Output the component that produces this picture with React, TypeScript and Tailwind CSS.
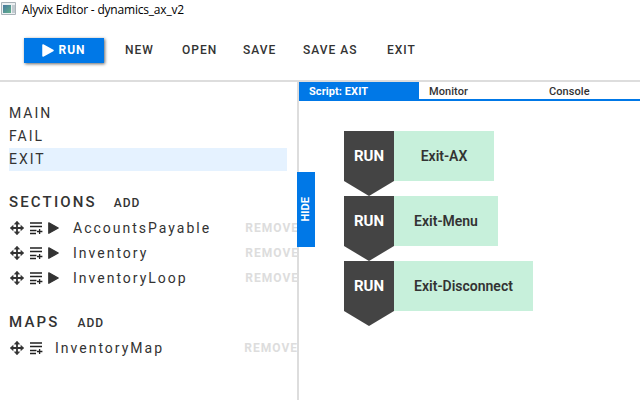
import React from 'react';

function MoveIcon() {
  return (
    <svg width="16" height="16" viewBox="0 0 16 16" className="shrink-0">
      <path d="M8 2.5v11M2.5 8h11" stroke="#333" strokeWidth="1.8" />
      <path d="M8 1L10.8 4.2H5.2zM8 15L5.2 11.8h5.6zM1 8L4.2 5.2v5.6zM15 8L11.8 10.8V5.2z" fill="#333" stroke="#333" strokeWidth=".4" strokeLinejoin="round" />
    </svg>
  );
}

function ListAddIcon() {
  return (
    <svg width="13" height="13" viewBox="0 0 13 13" className="shrink-0">
      <path d="M0 1h12M0 4.5h12M0 8.5h6.5M0 11.5h6M7 9.5h5.4M9.6 7v5" stroke="#222" strokeWidth="1.3" />
    </svg>
  );
}

function PlayIcon() {
  return (
    <svg width="11" height="12" viewBox="0 0 11 12" className="shrink-0">
      <path d="M.8 .8L10.2 6 .8 11.2z" fill="#333" stroke="#333" strokeWidth="1.3" strokeLinejoin="round" />
    </svg>
  );
}

function Row({ name, play, removeClass }: { name: string; play?: boolean; removeClass: string }) {
  return (
    <div className="flex h-[25px] w-full items-center pl-[9px]">
      <MoveIcon />
      <span className="ml-[5px] mt-[2px] flex">
        <ListAddIcon />
      </span>
      {play && (
        <span className="ml-[5px] mt-px flex">
          <PlayIcon />
        </span>
      )}
      <span className={`mt-px text-[14px] tracking-[2px] ${play ? 'ml-[14px]' : 'ml-[12px]'}`}>{name}</span>
      <span className={`ml-auto shrink-0 text-[12px] font-bold tracking-[1px] text-[#ddd] ${removeClass}`}>REMOVE</span>
    </div>
  );
}

function Heading({ title, addClass }: { title: string; addClass: string }) {
  return (
    <div className="flex h-[25px] items-center pl-[9px]">
      <span className="text-[15px] font-medium tracking-[2.15px]">{title}</span>
      <span className={`mt-px text-[12px] font-medium tracking-[1px] ${addClass}`}>ADD</span>
    </div>
  );
}

function Step({ label, width }: { label: string; width: string }) {
  return (
    <div className="flex h-[65px]">
      <div className="relative h-[65px] w-[50px]">
        <svg width="50" height="65" className="absolute inset-0">
          <path d="M0 0h50v50L25 65 0 50z" fill="#444" />
        </svg>
        <div className="relative flex h-[50px] items-center justify-center text-[15px] font-bold text-white">RUN</div>
      </div>
      <div className={`flex h-[50px] items-center justify-center bg-[#c7f0db] text-[14px] font-semibold ${width}`}>{label}</div>
    </div>
  );
}

export default function App() {
  return (
    <div className="flex h-[400px] w-[640px] flex-col overflow-hidden bg-white font-['Roboto',sans-serif] text-[#333]">
      <header className="flex h-5 items-center pl-px font-['Open_Sans',sans-serif] text-[12px] text-black">
        <svg width="16" height="14" viewBox="0 0 16 14" className="mr-[5px] mt-[-3px]">
          <defs>
            <linearGradient id="screen" x2="1" y2="1">
              <stop stopColor="#4778a0" />
              <stop offset="1" stopColor="#62b18a" />
            </linearGradient>
          </defs>
          <path d="M.5 .5h14v12H.5z" fill="#edf0f2" stroke="#a9b2b8" />
          <path d="M2 3h8v8H2z" fill="url(#screen)" />
          <path d="M11 3h3v8h-3z" fill="#c2cbd0" />
        </svg>
        <span className="tracking-[-0.2px]">Alyvix Editor - dynamics_ax_v2</span>
      </header>
      <nav className="flex h-[62px] shrink-0 items-start border-b-2 border-[#ddd] pl-6 pt-[18px] text-[12px] font-medium leading-[25px] tracking-[1px]">
        <button className="flex h-[25px] w-20 items-center justify-center bg-[#0078e7] font-bold text-white shadow-[1px_1px_3px_rgba(0,0,0,0.6)]">
          <svg width="12" height="13" viewBox="0 0 12 13" className="-mt-px mr-1">
            <path d="M1 1L11 6.5 1 12z" fill="white" stroke="white" strokeWidth="1.5" strokeLinejoin="round" />
          </svg>
          RUN
        </button>
        <span className="ml-[21px] w-[57px]">NEW</span>
        <span className="w-[61px]">OPEN</span>
        <span className="w-[60px]">SAVE</span>
        <span className="w-[84px]">SAVE AS</span>
        <span>EXIT</span>
      </nav>
      <div className="flex min-h-0 flex-1">
        <aside className="relative w-[299px] shrink-0 border-r-2 border-[#ddd] pt-5">
          <div className="ml-[9px] w-[278px] text-[14px] leading-[23px] tracking-[2px]">
            <div>MAIN</div>
            <div>FAIL</div>
            <div className="bg-[#e5f2ff]">EXIT</div>
          </div>
          <div className="mt-[19px]">
            <Heading title="SECTIONS" addClass="ml-[17px]" />
            <Row name="AccountsPayable" play removeClass="-mr-[2px]" />
            <Row name="Inventory" play removeClass="-mr-[2px]" />
            <Row name="InventoryLoop" play removeClass="-mr-[2px]" />
          </div>
          <div className="mt-5">
            <Heading title="MAPS" addClass="ml-[18px]" />
            <Row name="InventoryMap" removeClass="-mr-px" />
          </div>
          <div className="absolute left-[297px] top-[90px] z-10 flex h-[75px] w-[18px] items-center justify-center bg-[#0078e7]">
            <span className="-rotate-90 text-[11px] font-bold text-white">HIDE</span>
          </div>
        </aside>
        <main className="min-w-0 flex-1">
          <div className="flex h-[19px] border-b-2 border-[#0078e7] text-[11px] font-medium leading-[20px]">
            <div className="h-[19px] w-[120px] bg-[#0078e7] pl-[10px] font-bold tracking-[0.08px] text-white">Script: EXIT</div>
            <div className="w-[120px] pl-[10px] tracking-[0.08px]">Monitor</div>
            <div className="pl-[10px] tracking-[0.08px]">Console</div>
          </div>
          <div className="pl-[45px] pt-[30px]">
            <Step label="Exit-AX" width="w-[100px]" />
            <Step label="Exit-Menu" width="w-[104px]" />
            <Step label="Exit-Disconnect" width="w-[139px]" />
          </div>
        </main>
      </div>
    </div>
  );
}
